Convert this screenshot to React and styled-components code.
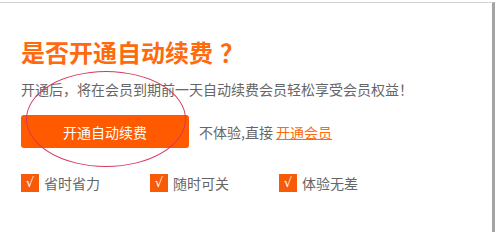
import React from "react";
import styled, { createGlobalStyle } from "styled-components";

const Global = createGlobalStyle`
  html, body {
    margin: 0;
    padding: 0;
    background: #fff;
  }
  body {
    font-family: "Noto Sans CJK SC", "Liberation Sans", sans-serif;
    text-spacing-trim: space-all;
  }
`;

const features = ["省时省力", "随时可关", "体验无差"];

export default function App() {
  return (
    <>
      <Global />
      <Frame>
        <Content>
          <Title>
            是否开通自动续费<Question>？</Question>
          </Title>
          <Desc>开通后，将在会员到期前一天自动续费会员轻松享受会员权益！</Desc>
          <ActionRow>
            <PrimaryButton>开通自动续费</PrimaryButton>
            <Alt>
              不体验,直接 <AltLink href="#">开通会员</AltLink>
            </Alt>
          </ActionRow>
          <Features>
            {features.map((f) => (
              <Feature key={f}>
                <Tick>√</Tick>
                {f}
              </Feature>
            ))}
          </Features>
          <Ring />
        </Content>
      </Frame>
    </>
  );
}

const Frame = styled.div`
  width: 492px;
  height: 229px;
  margin-top: 2px;
  border-top: 1px solid #d2d2d2;
  border-right: 3px solid #a3a3a3;
  background: #fff;
`;

const Content = styled.div`
  position: relative;
  padding: 33px 0 0 21px;
`;

const Title = styled.h1`
  margin: 0;
  font-size: 24px;
  line-height: 32px;
  font-weight: 700;
  color: #ff6a0d;
`;

const Question = styled.span`
  padding-left: 7px;
`;

const Desc = styled.p`
  margin: 11px 0 0;
  font-size: 14px;
  line-height: 20px;
  color: #666;
`;

const ActionRow = styled.div`
  display: flex;
  align-items: center;
  margin-top: 16px;
  gap: 10px;
`;

const PrimaryButton = styled.button`
  width: 168px;
  height: 33px;
  border: 0;
  border-radius: 3px;
  background: #ff5a00;
  color: #fff;
  font-family: inherit;
  font-size: 14px;
  cursor: pointer;
`;

const Alt = styled.span`
  font-size: 14px;
  color: #666;
`;

const AltLink = styled.a`
  color: #ff6a0d;
  text-decoration: underline;
`;

const Features = styled.div`
  display: flex;
  margin-top: 26px;
`;

const Feature = styled.div`
  display: flex;
  align-items: center;
  gap: 5px;
  width: 129px;
  font-size: 14px;
  line-height: 18px;
  color: #666;
`;

const Tick = styled.span`
  display: inline-flex;
  align-items: center;
  justify-content: center;
  width: 18px;
  height: 18px;
  background: #f85a08;
  color: #fff;
  font-family: "DejaVu Sans", sans-serif;
  font-size: 13px;
  font-weight: 400;
`;

const Ring = styled.div`
  position: absolute;
  left: 26px;
  top: 68px;
  width: 158px;
  height: 94px;
  border: 1px solid #d6385c;
  border-radius: 50%;
  pointer-events: none;
`;
